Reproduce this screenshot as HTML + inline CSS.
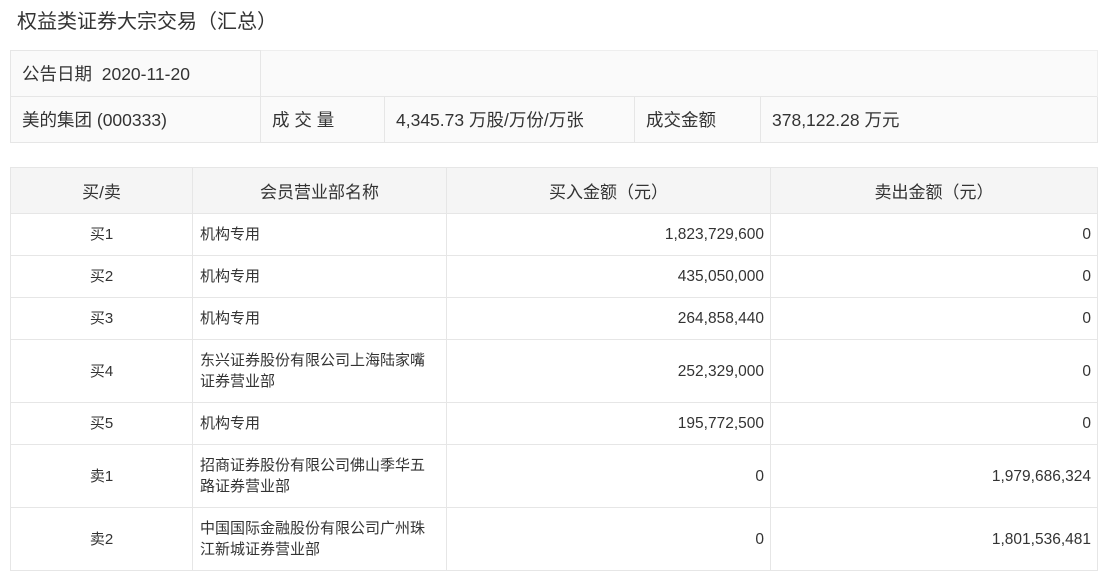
<!DOCTYPE html>
<html><head><meta charset="utf-8"><style>
body{margin:0;width:1110px;height:575px;background:#fff;font-family:"Liberation Sans","Noto Sans CJK SC",sans-serif;color:#333;overflow:hidden}
.t{position:absolute;left:17px;top:5px;font-size:20px}
table{position:absolute;border-collapse:collapse;table-layout:fixed}
td,th{border:1px solid #e6e6e6;padding:0}
#a{left:10px;top:50px;width:1087px;font-size:17.5px;background:#fafafa}
#a td{height:45px;padding-left:11px}
#b{left:10px;top:167px;width:1087px;font-size:15px}
#b th{background:#f5f5f5;font-weight:normal;font-size:17px;height:45px}
#b td{height:41px;line-height:21px}
#b td.c{text-align:center}
#b td.n{padding-left:7px}
#b td.r{text-align:right;padding-right:6px;font-size:15.5px}
#b tr.tall td{height:62px}
</style></head><body>
<div class="t">权益类证券大宗交易（汇总）</div>
<table id="a">
<colgroup><col style="width:250px"><col style="width:124px"><col style="width:250px"><col style="width:126px"><col style="width:337px"></colgroup>
<tr><td>公告日期&nbsp; 2020-11-20</td><td colspan="4" style="border:none;border-top:1px solid #eee;border-right:1px solid #eee"></td></tr>
<tr><td>美的集团 (000333)</td><td>成 交 量</td><td>4,345.73 万股/万份/万张</td><td>成交金额</td><td>378,122.28 万元</td></tr>
</table>
<table id="b">
<colgroup><col style="width:182px"><col style="width:254px"><col style="width:324px"><col style="width:327px"></colgroup>
<tr><th>买/卖</th><th>会员营业部名称</th><th>买入金额（元）</th><th>卖出金额（元）</th></tr>
<tr><td class="c">买1</td><td class="n">机构专用</td><td class="r">1,823,729,600</td><td class="r">0</td></tr>
<tr><td class="c">买2</td><td class="n">机构专用</td><td class="r">435,050,000</td><td class="r">0</td></tr>
<tr><td class="c">买3</td><td class="n">机构专用</td><td class="r">264,858,440</td><td class="r">0</td></tr>
<tr class="tall"><td class="c">买4</td><td class="n">东兴证券股份有限公司上海陆家嘴<br>证券营业部</td><td class="r">252,329,000</td><td class="r">0</td></tr>
<tr><td class="c">买5</td><td class="n">机构专用</td><td class="r">195,772,500</td><td class="r">0</td></tr>
<tr class="tall"><td class="c">卖1</td><td class="n">招商证券股份有限公司佛山季华五<br>路证券营业部</td><td class="r">0</td><td class="r">1,979,686,324</td></tr>
<tr class="tall"><td class="c">卖2</td><td class="n">中国国际金融股份有限公司广州珠<br>江新城证券营业部</td><td class="r">0</td><td class="r">1,801,536,481</td></tr>
</table>
</body></html>
